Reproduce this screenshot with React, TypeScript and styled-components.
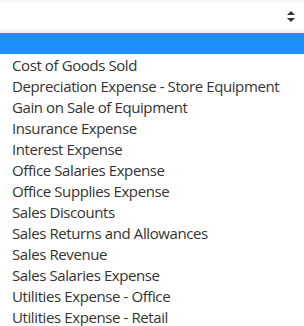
import React from 'react';
import styled, { createGlobalStyle } from 'styled-components';

const GlobalStyle = createGlobalStyle`
  body {
    margin: 0;
    background: #ffffff;
    font-family: 'Open Sans', 'Noto Sans', sans-serif;
    overflow: hidden;
  }
`;

const Wrapper = styled.div`
  width: 304px;
  display: flex;
  flex-direction: column;
`;

const SelectBox = styled.div`
  height: 34px;
  display: flex;
  align-items: center;
  justify-content: flex-end;
  padding-right: 8px;
  box-sizing: border-box;
  background: linear-gradient(
    to bottom,
    #f2f2f2 0px,
    #ffffff 4px,
    #ffffff 28px,
    #ececec 33px,
    #e4e4e4 34px
  );
  border-bottom: 1px solid #7b7b7b;
`;

const OptionList = styled.ul`
  list-style: none;
  margin: 0;
  padding: 0;
`;

const Option = styled.li<{ $selected?: boolean }>`
  height: 21px;
  line-height: 23px;
  padding-left: 12px;
  font-size: 15px;
  letter-spacing: -0.4px;
  color: #333333;
  white-space: nowrap;
  background: ${(p) => (p.$selected ? '#1e90ff' : 'transparent')};
  &:first-child {
    height: 20px;
  }
`;

const options = [
  'Cost of Goods Sold',
  'Depreciation Expense - Store Equipment',
  'Gain on Sale of Equipment',
  'Insurance Expense',
  'Interest Expense',
  'Office Salaries Expense',
  'Office Supplies Expense',
  'Sales Discounts',
  'Sales Returns and Allowances',
  'Sales Revenue',
  'Sales Salaries Expense',
  'Utilities Expense - Office',
  'Utilities Expense - Retail',
];

function SortArrows(): JSX.Element {
  return (
    <svg width="10" height="11" viewBox="0 0 10 11">
      <path d="M5 0 L9 4 L1 4 Z" fill="#333" />
      <path d="M1 7 L9 7 L5 11 Z" fill="#333" />
    </svg>
  );
}

export default function App(): JSX.Element {
  return (
    <Wrapper>
      <GlobalStyle />
      <SelectBox>
        <SortArrows />
      </SelectBox>
      <OptionList>
        <Option $selected>&nbsp;</Option>
        {options.map((it) => (
          <Option key={it}>{it}</Option>
        ))}
      </OptionList>
    </Wrapper>
  );
}
